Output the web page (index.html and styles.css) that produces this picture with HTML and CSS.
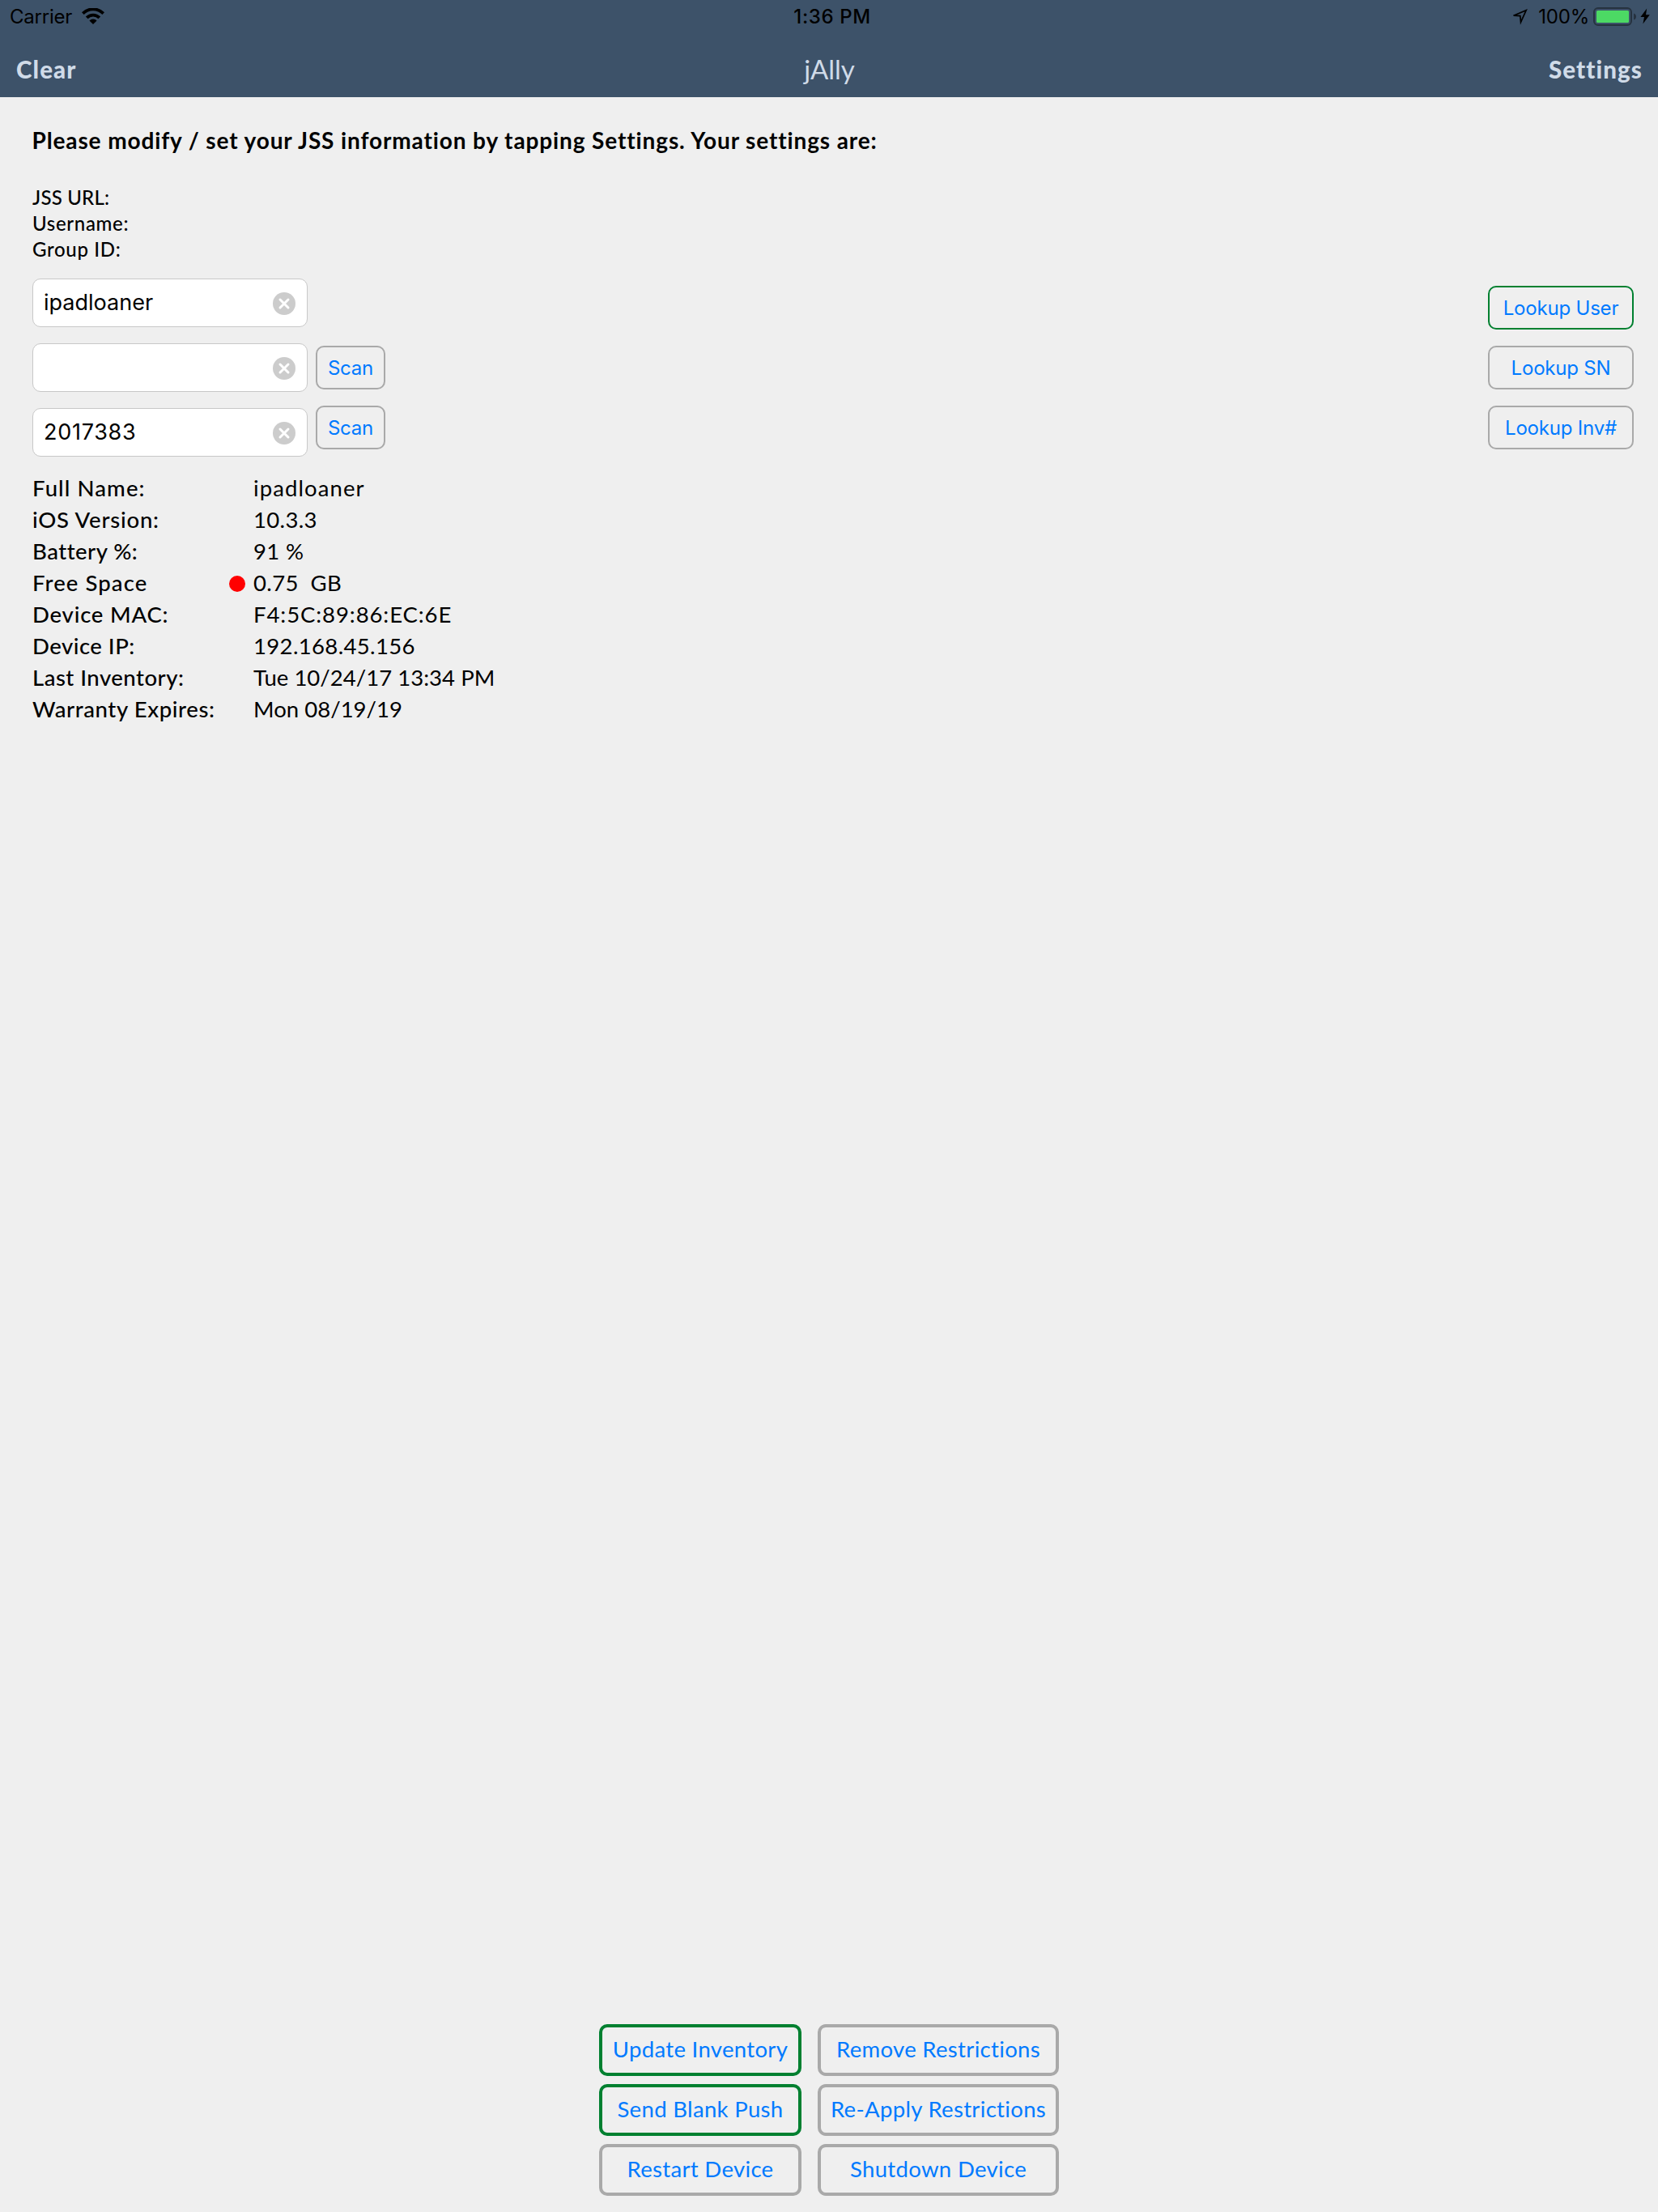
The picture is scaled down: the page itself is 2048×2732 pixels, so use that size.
FILE: index.html
```
<!DOCTYPE html>
<html lang="en">
<head>
  <meta charset="utf-8">
  <title>jAlly</title>
  <link rel="stylesheet" href="styles.css">
</head>
<body>
  <header class="topbar">
    <div class="status">
      <div class="status-left">
        <span>Carrier</span>
        <svg class="wifi" width="28" height="20" viewBox="0 0 28 20">
          <path d="M1.3 6.6A18 18 0 0 1 26.7 6.6" fill="none" stroke="#000" stroke-width="3.9"/>
          <path d="M6.2 11.8A11 11 0 0 1 21.8 11.8" fill="none" stroke="#000" stroke-width="3.8"/>
          <path d="M14 20L9.4 15.4A6.5 6.5 0 0 1 18.6 15.4Z"/>
        </svg>
      </div>
      <div class="status-time">1:36 PM</div>
      <div class="status-right">
        <svg class="location" width="20" height="20" viewBox="0 0 20 20">
          <path d="M2.6 8.2L18.2 1.7L11.5 16.4L10.8 8.6Z" fill="none" stroke="#000" stroke-width="1.7"/>
        </svg>
        <span class="percent">100%</span>
        <svg class="battery" width="54" height="24" viewBox="0 0 54 24">
          <rect x="1" y="1" width="46" height="21" rx="5" fill="none" stroke="#26323f" stroke-width="2"/>
          <rect x="4" y="4" width="40" height="15" rx="1.5" fill="#4cd964"/>
          <path d="M50 7.5Q53 8.5 53 11.5T50 15.5Z" fill="#26323f"/>
        </svg>
        <svg class="bolt" width="12" height="20" viewBox="0 0 12 20">
          <path d="M8.2 0.5L0.4 11H5L3.4 19.5L11.8 8.2H7Z"/>
        </svg>
      </div>
    </div>
    <nav class="nav">
      <a class="nav-link">Clear</a>
      <h1 class="nav-title">jAlly</h1>
      <a class="nav-link nav-link-end">Settings</a>
    </nav>
  </header>

  <main class="content">
    <h2 class="intro">Please modify / set your JSS information by tapping Settings. Your settings are:</h2>
    <ul class="server">
      <li class="server-url">JSS URL:</li>
      <li>Username:</li>
      <li>Group ID:</li>
    </ul>

    <section class="search">
      <div class="fields">
        <div class="field">
          <span>ipadloaner</span>
          <svg width="28" height="28" viewBox="0 0 28 28"><circle cx="14" cy="14" r="14" fill="#ccc"/><path d="M9 9L19 19M19 9L9 19" stroke="#fff" stroke-width="3" stroke-linecap="round"/></svg>
        </div>
        <div class="field">
          <span></span>
          <svg width="28" height="28" viewBox="0 0 28 28"><circle cx="14" cy="14" r="14" fill="#ccc"/><path d="M9 9L19 19M19 9L9 19" stroke="#fff" stroke-width="3" stroke-linecap="round"/></svg>
        </div>
        <div class="field">
          <span class="digits">2017383</span>
          <svg width="28" height="28" viewBox="0 0 28 28"><circle cx="14" cy="14" r="14" fill="#ccc"/><path d="M9 9L19 19M19 9L9 19" stroke="#fff" stroke-width="3" stroke-linecap="round"/></svg>
        </div>
      </div>
      <div class="scans">
        <button class="small-button">Scan</button>
        <button class="small-button">Scan</button>
      </div>
      <div class="lookups">
        <button class="small-button active">Lookup User</button>
        <button class="small-button">Lookup SN</button>
        <button class="small-button">Lookup Inv#</button>
      </div>
    </section>

    <dl class="details">
      <dt class="wide">Full Name:</dt><dd class="wide">ipadloaner</dd>
      <dt>iOS Version:</dt><dd>10.3.3</dd>
      <dt class="narrow">Battery %:</dt><dd>91 %</dd>
      <dt class="wide">Free Space <i class="dot"></i></dt><dd>0.75  GB</dd>
      <dt>Device MAC:</dt><dd class="mac">F4:5C:89:86:EC:6E</dd>
      <dt class="narrow">Device IP:</dt><dd>192.168.45.156</dd>
      <dt class="narrow">Last Inventory:</dt><dd class="tight">Tue 10/24/17 13:34 PM</dd>
      <dt class="expires">Warranty Expires:</dt><dd class="tight">Mon 08/19/19</dd>
    </dl>

    <section class="actions">
      <button class="action active">Update Inventory</button>
      <button class="action">Remove Restrictions</button>
      <button class="action active">Send Blank Push</button>
      <button class="action">Re-Apply Restrictions</button>
      <button class="action">Restart Device</button>
      <button class="action">Shutdown Device</button>
    </section>
  </main>
</body>
</html>
```
FILE: styles.css
```
* {
  box-sizing: border-box;
  margin: 0;
  padding: 0;
}

body {
  display: flex;
  flex-direction: column;
  min-height: 2732px;
  background: #efefef;
  color: #000;
  font-family: Lato, sans-serif;
  font-variant-ligatures: none;
}

svg {
  display: block;
  flex: none;
}

button {
  background: none;
  color: #007aff;
  white-space: nowrap;
}

/* Header */
.topbar {
  height: 120px;
  background: #3d5269;
}

.status {
  display: grid;
  grid-template-columns: 1fr auto 1fr;
  height: 40px;
  padding: 0 10px 0 12px;
  font: 24px/42px Inter, sans-serif;
}

.status-left,
.status-right {
  display: flex;
  align-items: flex-start;
  letter-spacing: -0.22px;
}

.status-right {
  justify-content: flex-end;
}

.wifi {
  margin: 10px 0 0 12px;
}

.status-time {
  padding-left: 6px;
  font-weight: 500;
  letter-spacing: 0.6px;
}

.location {
  margin: 11px 13px 0 0;
}

.battery {
  margin: 9px 4px 0 5px;
}

.bolt {
  margin-top: 10px;
}

.nav {
  display: grid;
  grid-template-columns: 1fr auto 1fr;
  height: 80px;
  padding: 11px 19px 0 20px;
  color: #d0dbe8;
  line-height: 69px;
}

.nav-link {
  font-size: 29.5px;
  font-weight: 900;
  letter-spacing: 1.1px;
}

.nav-link-end {
  text-align: right;
}

.nav-title {
  font-size: 33px;
  font-weight: 400;
}

/* Content */
.content {
  display: flex;
  flex: 1;
  flex-direction: column;
  padding: 33px 30px 20px 40px;
}

.intro {
  font-size: 28px;
  font-weight: 700;
  line-height: 41px;
  letter-spacing: 0.88px;
  margin-left: -0.5px;
}

.server {
  margin-top: 34px;
  list-style: none;
  font-size: 24px;
  font-weight: 500;
  line-height: 32px;
  letter-spacing: 0.68px;
}

.server-url {
  letter-spacing: 0.21px;
}

.search {
  display: flex;
  align-items: flex-start;
  margin-top: 20px;
}

.fields,
.scans,
.lookups {
  display: flex;
  flex-direction: column;
  gap: 20px;
}

.field {
  display: flex;
  align-items: center;
  justify-content: space-between;
  width: 340px;
  height: 60px;
  padding: 0 14px 0 13px;
  border: 1px solid #c8c8c8;
  border-radius: 10px;
  background: #fff;
  font: 27px/58px Inter, sans-serif;
}

.field svg {
  margin-top: 2px;
}

.digits {
  letter-spacing: 0.72px;
}

.scans {
  width: 86px;
  margin: 83px 0 0 10px;
}

.lookups {
  width: 180px;
  margin: 9px 0 0 auto;
}

.small-button {
  height: 54px;
  padding-top: 2px;
  border: 2px solid #a9a9a9;
  border-radius: 10px;
  font: 24px/48px Inter, sans-serif;
  letter-spacing: -0.2px;
}

.details {
  display: grid;
  grid-template-columns: 273px auto;
  margin-top: 19px;
  font-size: 27.5px;
  line-height: 39px;
}

.details dt {
  display: flex;
  align-items: center;
  justify-content: space-between;
  padding-right: 10px;
  font-weight: 500;
  letter-spacing: 0.8px;
}

.details dd {
  letter-spacing: 0.35px;
  white-space: pre;
}

.details .wide {
  letter-spacing: 1.1px;
}

.details .mac {
  letter-spacing: 0.92px;
}

.details .narrow {
  letter-spacing: 0.5px;
}

.details .expires {
  letter-spacing: 0.62px;
}

.details .tight {
  letter-spacing: 0.03px;
}

.dot {
  width: 20px;
  height: 20px;
  margin-top: 3px;
  border-radius: 50%;
  background: #f00;
}

.actions {
  display: grid;
  grid-template-columns: 250px 298px;
  gap: 10px 20px;
  align-self: center;
  margin: auto 0 0 -10px;
}

.action {
  height: 64px;
  padding-bottom: 2px;
  border: 4px solid #a9a9a9;
  border-radius: 10px;
  font: 27.5px/54px Lato, sans-serif;
  letter-spacing: 0.33px;
}

.active {
  border-color: #008030;
}
```
